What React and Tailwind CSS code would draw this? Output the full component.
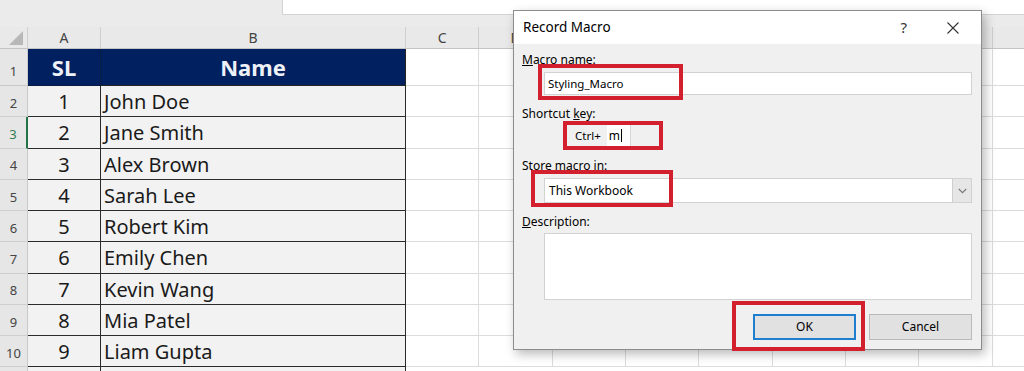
import React from "react";

const names = ["John Doe", "Jane Smith", "Alex Brown", "Sarah Lee", "Robert Kim", "Emily Chen", "Kevin Wang", "Mia Patel", "Liam Gupta"];
const extraCols = ["C", "D", "E", "F", "G", "H", "I", "J", "K"];
const shownLabels = ["C", "D"];

function ExtraCells({ header }) {
  return extraCols.map((c) =>
    header ? (
      <div key={c} className="w-[73.33px] shrink-0 border-r border-[#cfcfcf] flex items-center justify-center text-[14px] text-[#444]">
        {shownLabels.includes(c) ? c : null}
      </div>
    ) : (
      <div key={c} className="w-[73.33px] shrink-0 bg-white border-r border-b border-[#dcdcdc]" />
    )
  );
}

function RedBox({ className }) {
  return <div className={"absolute border-[4px] border-[#d3202e] pointer-events-none " + className} />;
}

function Dialog() {
  return (
    <div className="absolute left-[513px] top-[10px] w-[469px] h-[340px] border border-[#8c8c8c] bg-[#f0f0f0] shadow-[3px_4px_10px_rgba(0,0,0,0.28)] font-['Noto_Sans',sans-serif] text-black flex flex-col">
      <div className="h-[33px] bg-white flex items-center pl-[9px] pr-[22px] shrink-0">
        <span className="text-[13.5px]">Record Macro</span>
        <span className="ml-auto text-[15px] text-[#333] mr-[40px]">?</span>
        <svg width="12" height="12" viewBox="0 0 12 12" className="mt-[1px]">
          <path d="M0.5 0.5 L11.5 11.5 M11.5 0.5 L0.5 11.5" stroke="#333" strokeWidth="1.1" fill="none" />
        </svg>
      </div>
      <div className="flex-1 flex flex-col pl-[8px] pr-[9px] text-[12px]">
        <div className="h-[16px] mt-[8px] leading-[16px]">
          <span className="underline">M</span>acro name:
        </div>
        <div className="ml-[22px] mt-[4px] h-[23px] bg-white border border-[#d2d2d2] flex items-center pl-[3px] text-[11.5px]">
          Styling_Macro
        </div>
        <div className="h-[16px] mt-[11px] leading-[16px]">
          Shortcut <span className="underline">k</span>ey:
        </div>
        <div className="mt-[3px] h-[21px] flex items-center">
          <span className="ml-[53px] text-[11.5px]">Ctrl+</span>
          <div className="ml-[6px] w-[24px] h-[21px] bg-white border-r border-[#d6d6d6] flex items-center pl-[2px] text-[12px]">
            m<span className="inline-block w-px h-[13px] bg-black ml-px" />
          </div>
        </div>
        <div className="h-[16px] mt-[12px] leading-[16px]">
          Store macro <span className="underline">i</span>n:
        </div>
        <div className="ml-[22px] mt-[4px] h-[25px] bg-white border border-[#d2d2d2] flex items-center text-[12px]">
          <span className="pl-[4px]">This Workbook</span>
          <div className="ml-auto w-[19px] h-full bg-[#e6e6e6] border-l border-[#cfcfcf] flex items-center justify-center">
            <svg width="9" height="6" viewBox="0 0 9 6">
              <path d="M0.8 1 L4.5 4.6 L8.2 1" stroke="#7a7a7a" strokeWidth="1.2" fill="none" />
            </svg>
          </div>
        </div>
        <div className="h-[16px] mt-[11px] leading-[16px]">
          <span className="underline">D</span>escription:
        </div>
        <div className="ml-[22px] mt-[3px] h-[67px] bg-white border border-[#d2d2d2]" />
        <div className="mt-[14px] h-[26px] flex justify-end gap-[13px]">
          <div className="w-[103px] h-[26px] bg-[#e1e1e1] border-2 border-[#1f7fcf] flex items-center justify-center text-[12px]">OK</div>
          <div className="w-[103px] h-[26px] bg-[#e1e1e1] border border-[#b9b9b9] flex items-center justify-center text-[12px]">Cancel</div>
        </div>
      </div>
      <RedBox className="left-[24px] top-[53px] w-[145px] h-[36px]" />
      <RedBox className="left-[49px] top-[110px] w-[100px] h-[29px]" />
      <RedBox className="left-[17px] top-[159px] w-[142px] h-[37px]" />
      <RedBox className="left-[218px] top-[290px] w-[133px] h-[50px]" />
    </div>
  );
}

export default function App() {
  return (
    <div className="relative w-[1024px] h-[371px] overflow-hidden bg-white font-['Noto_Sans',sans-serif]">
      {/* top band */}
      <div className="h-[27px] bg-[#ebebeb] flex">
        <div className="w-[282px] shrink-0" />
        <div className="flex-1 h-[15px] bg-white border-l border-b border-[#d3d3d3]" />
      </div>
      {/* column headers */}
      <div className="h-[22px] flex bg-[#e9e9e9] border-b border-[#c4c4c4]">
        <div className="w-[28px] shrink-0 border-r border-[#cfcfcf] relative">
          <svg width="16" height="15" viewBox="0 0 16 15" className="absolute right-[3px] bottom-[2px]">
            <polygon points="15,0 15,14 1,14" fill="#b8b8b8" />
          </svg>
        </div>
        <div className="w-[73px] shrink-0 border-r border-[#cfcfcf] flex items-center justify-center text-[14px] text-[#444]">A</div>
        <div className="w-[305px] shrink-0 border-r border-[#cfcfcf] flex items-center justify-center text-[14px] text-[#444]">B</div>
        <ExtraCells header />
      </div>
      {/* row 1 */}
      <div className="h-[37px] flex">
        <div className="w-[28px] shrink-0 bg-[#e6e6e6] border-r border-b border-[#c9c9c9] flex items-end justify-center pb-[4px] text-[13px] text-[#444]">1</div>
        <div className="w-[73px] shrink-0 bg-[#002060] border-r border-b border-[#0a1a40] flex items-center justify-center text-[22px] font-bold text-[#eef1f8]">SL</div>
        <div className="w-[305px] shrink-0 bg-[#002060] border-r border-b border-[#262626] flex items-center justify-center text-[22px] font-bold text-[#eef1f8]">Name</div>
        <ExtraCells />
      </div>
      {names.map((name, i) => (
        <div key={name} className="h-[31.25px] flex">
          <div
            className={
              "w-[28px] shrink-0 bg-[#e6e6e6] border-b border-[#cfcfcf] flex items-end justify-center pb-[3px] text-[13px] " +
              (i === 1 ? "border-r-2 border-r-[#217346] text-[#2e7d4f] bg-[#d8d8d8]" : "border-r border-r-[#c9c9c9] text-[#444]")
            }
          >
            {i + 2}
          </div>
          <div className="w-[73px] shrink-0 bg-[#f2f2f2] border-r border-b border-[#2a2a2a] flex items-center justify-center pt-[2px] text-[20px] text-[#1a1a1a]">
            {i + 1}
          </div>
          <div className="w-[305px] shrink-0 bg-[#f2f2f2] border-r border-b border-[#2a2a2a] flex items-center pl-[3px] pt-[2px] text-[20px] text-[#1a1a1a]">
            {name}
          </div>
          <ExtraCells />
        </div>
      ))}
      <div className="h-[10px] flex">
        <div className="w-[28px] shrink-0 bg-[#e6e6e6] border-r border-[#c9c9c9]" />
        <div className="w-[73px] shrink-0 bg-[#f2f2f2] border-r border-[#2a2a2a]" />
        <div className="w-[305px] shrink-0 bg-[#f2f2f2] border-r border-[#2a2a2a]" />
      </div>
      <Dialog />
    </div>
  );
}
